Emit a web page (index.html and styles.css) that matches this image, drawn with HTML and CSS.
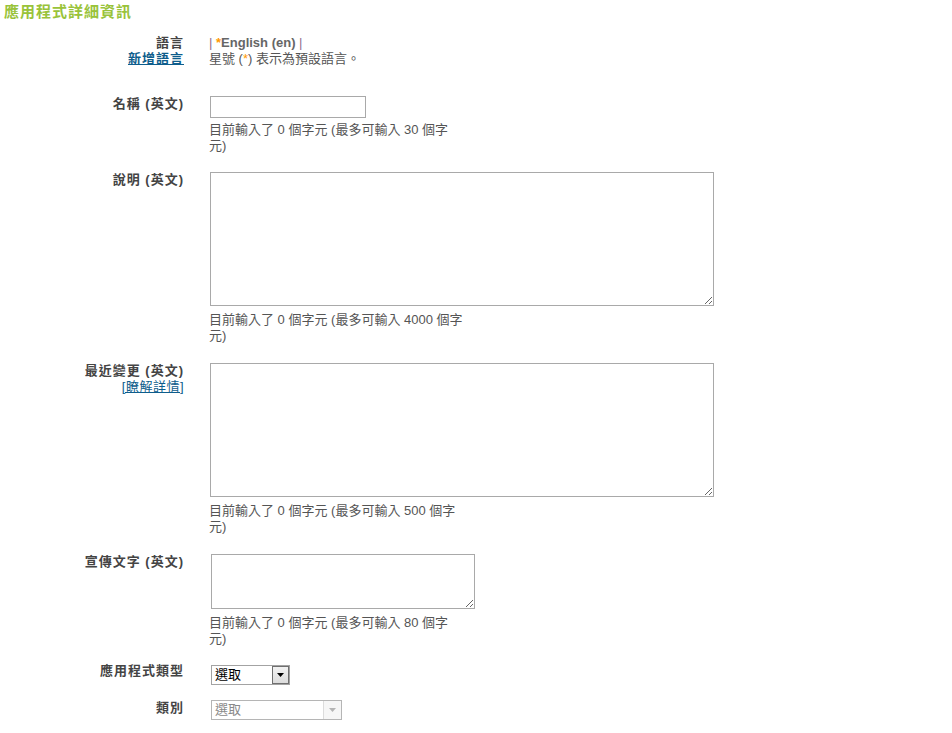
FILE: index.html
```html
<!DOCTYPE html>
<html lang="zh-Hant">
<head>
<meta charset="utf-8">
<title>應用程式詳細資訊</title>
<link rel="stylesheet" href="styles.css">
</head>
<body>
<h1 class="title">應用程式詳細資訊</h1>
<div class="form">
  <div class="row row-lang">
    <div class="label">
      <div>語言</div>
      <a class="link link-strong" href="#">新增語言</a>
    </div>
    <div class="value">
      <div class="langs"><span class="sep">|</span> <span class="star">*</span>English (en) <span class="sep">|</span></div>
      <div class="note">星號 (<span class="star">*</span>) 表示為預設語言。</div>
    </div>
  </div>

  <div class="row row-tight">
    <div class="label">名稱 (英文)</div>
    <div class="value">
      <input class="field input-name" type="text">
      <div class="help help-input">目前輸入了 0 個字元 (最多可輸入 30 個字元)</div>
    </div>
  </div>

  <div class="row">
    <div class="label">說明 (英文)</div>
    <div class="value">
      <textarea class="field ta-lg"></textarea>
      <div class="help">目前輸入了 0 個字元 (最多可輸入 4000 個字元)</div>
    </div>
  </div>

  <div class="row">
    <div class="label">
      <div>最近變更 (英文)</div>
      <a class="link link-normal" href="#">[瞭解詳情]</a>
    </div>
    <div class="value">
      <textarea class="field ta-lg"></textarea>
      <div class="help">目前輸入了 0 個字元 (最多可輸入 500 個字元)</div>
    </div>
  </div>

  <div class="row row-tight">
    <div class="label">宣傳文字 (英文)</div>
    <div class="value">
      <textarea class="field ta-sm"></textarea>
      <div class="help">目前輸入了 0 個字元 (最多可輸入 80 個字元)</div>
    </div>
  </div>

  <div class="row row-type">
    <div class="label label-up">應用程式類型</div>
    <div class="value">
      <div class="select select-type">
        <span class="select-text">選取</span>
        <span class="select-btn"><svg width="7" height="4" viewBox="0 0 7 4"><polygon points="0,0 7,0 3.5,4" fill="#000"/></svg></span>
      </div>
    </div>
  </div>

  <div class="row row-last">
    <div class="label">類別</div>
    <div class="value">
      <div class="select select-cat is-disabled">
        <span class="select-text">選取</span>
        <span class="select-btn"><svg width="7" height="4" viewBox="0 0 7 4"><polygon points="0,0 7,0 3.5,4" fill="#b4b4b4"/></svg></span>
      </div>
    </div>
  </div>
</div>
</body>
</html>
```

FILE: styles.css
```css
body {
  margin: 0;
  background: #fff;
  color: #555;
  font-family: "Liberation Sans", "Noto Sans CJK TC", sans-serif;
  font-size: 13px;
  line-height: 16px;
}

.title {
  margin: 0;
  padding: 3px 0 0 4px;
  font-size: 15px;
  line-height: 18px;
  font-weight: bold;
  letter-spacing: 1px;
  color: #99c33a;
}

.form {
  margin-top: 14px;
}

.row {
  display: grid;
  grid-template-columns: 183px 1fr;
  column-gap: 26px;
  margin-bottom: 19px;
}

.row-lang { margin-bottom: 29px; }
.row-tight { margin-bottom: 18px; }
.row-type { margin-bottom: 15px; }
.row-last { margin-bottom: 0; }

.label {
  text-align: right;
  font-weight: bold;
  color: #444;
  letter-spacing: 1px;
  margin-right: -1px;
}

.label-up { margin-top: -2px; }

.link {
  color: #0e5d8c;
  text-decoration: underline;
}

.link-strong { font-weight: bold; }
.link-normal { font-weight: normal; letter-spacing: 0.5px; }

.value { min-width: 0; }

.langs {
  font-weight: bold;
  color: #666;
}

.sep { color: #8f6f8f; font-weight: normal; }
.star { color: #f90; }

.field {
  display: block;
  box-sizing: border-box;
  margin: 0 0 0 1px;
  padding: 2px;
  border: 1px solid #a9a9a9;
  background: #fff;
  font: inherit;
  color: #333;
  outline: none;
}

.input-name { width: 156px; height: 22px; }
.ta-lg { width: 504px; height: 134px; resize: both; }
.ta-sm { width: 264px; height: 55px; margin-left: 2px; resize: both; }

.help {
  width: 254px;
  margin-top: 6px;
}

.help-input { margin-top: 4px; }

.select {
  display: flex;
  box-sizing: border-box;
  height: 20px;
  margin-left: 2px;
  border: 1px solid #a3a3a3;
  background: #fff;
}

.select-type { width: 79px; }
.select-cat { width: 131px; }

.select-text {
  flex: 1;
  padding-left: 3px;
  line-height: 18px;
  color: #000;
}

.select-btn {
  display: flex;
  align-items: center;
  justify-content: center;
  box-sizing: border-box;
  width: 17px;
  border: 1px solid #6f6f6f;
  background: linear-gradient(#f2f2f2, #dcdcdc);
}

.is-disabled { border-color: #b5b5b5; }
.is-disabled .select-text { color: #8a8a8a; }
.is-disabled .select-btn {
  width: 18px;
  border: none;
  border-left: 1px solid #dcdcdc;
  background: #f6f6f6;
}
```
